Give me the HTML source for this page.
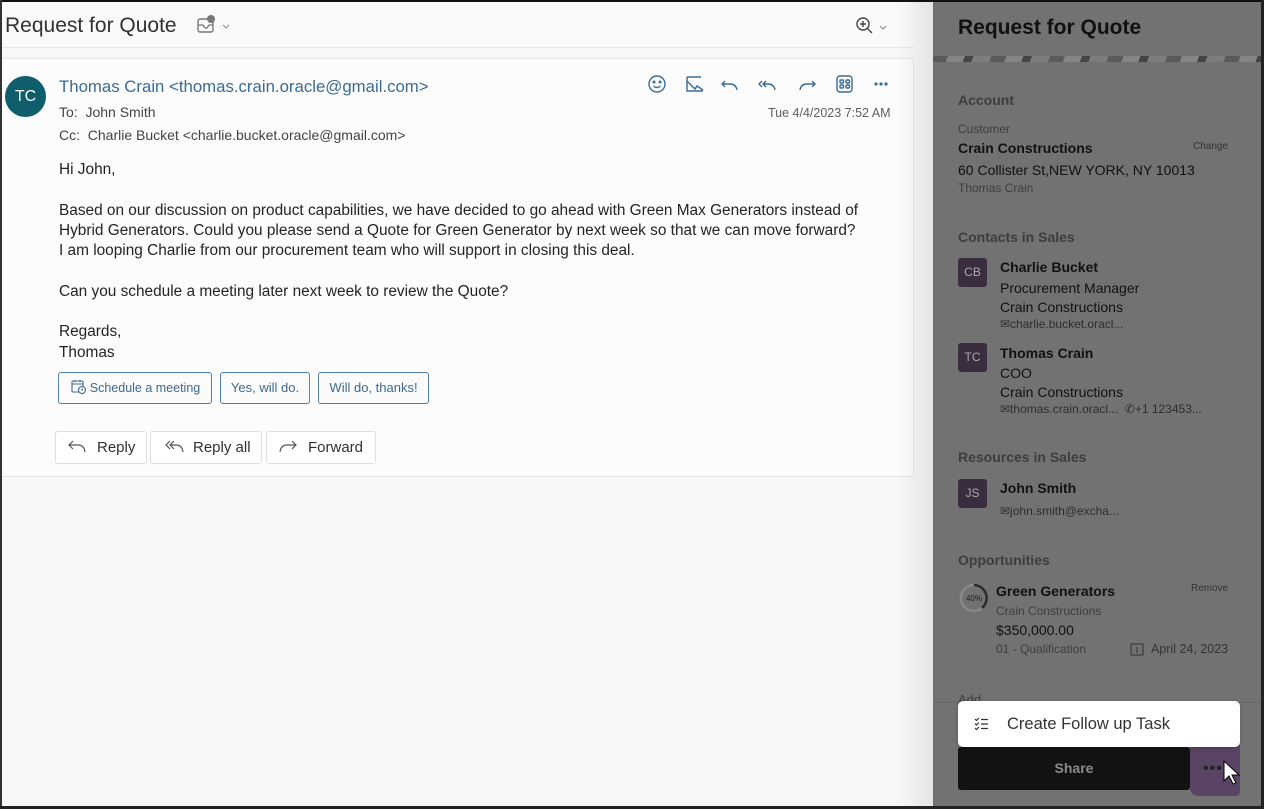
<!DOCTYPE html>
<html><head><meta charset="utf-8"><style>
*{margin:0;padding:0;box-sizing:border-box}
body{width:1264px;height:809px;overflow:hidden;background:#f8f8f7;font-family:"Liberation Sans",sans-serif;position:relative;color:#252423}
.a{position:absolute;white-space:nowrap}
.ic{position:absolute}
.btn{position:absolute;border:1px solid #4f7faa;border-radius:3px;color:#3c6a92;font-size:13px;text-align:center;line-height:30px;height:32px;background:#fbfbfb}
.rb{position:absolute;border:1px solid #e1dfdd;border-radius:3px;font-size:15px;color:#323130;height:33px;line-height:31px;background:#fff}
.p{color:#111}
</style></head><body>
<div class="a" style="left:0;top:0;width:1264px;height:2px;background:#111"></div>
<div class="a" style="left:0;top:0;width:2px;height:809px;background:#333"></div>
<div class="a" style="left:0;top:806px;width:1264px;height:3px;background:#222"></div>
<!-- header -->
<div class="a" style="left:2px;top:2px;width:912px;height:46px;background:#fafaf9;border-bottom:1px solid #e8e8e8"></div>
<div class="a" style="left:5px;top:14px;font-size:21px;color:#323130">Request for Quote</div>
<svg class="ic" style="left:196px;top:15px" width="40" height="22"><rect x="2" y="4" width="15" height="13" rx="2" fill="none" stroke="#777" stroke-width="1.4"/><path d="M2 10h5l2 3h2l2-3h4" fill="none" stroke="#777" stroke-width="1.3"/><circle cx="15" cy="4" r="4" fill="#777"/><path d="M27 10l3 3 3-3" fill="none" stroke="#888" stroke-width="1"/></svg>
<svg class="ic" style="left:855px;top:16px" width="36" height="20"><circle cx="8" cy="8" r="6" fill="none" stroke="#444" stroke-width="1.4"/><path d="M8 5v6M5 8h6M12 12l5 5" stroke="#444" stroke-width="1.4"/><path d="M25 10l3 3 3-3" fill="none" stroke="#888"/></svg>
<!-- message card -->
<div class="a" style="left:2px;top:58px;width:912px;height:419px;background:#fcfcfc;border:1px solid #e6e6e6;border-left:none"></div>
<div class="a" style="left:5px;top:76px;width:41px;height:41px;border-radius:50%;background:#0e5f6b;color:#fff;font-size:16px;text-align:center;line-height:41px">TC</div>
<div class="a" style="left:59px;top:77px;font-size:16.8px;color:#3b6c94">Thomas Crain &lt;thomas.crain.oracle@gmail.com&gt;</div>
<div class="a" style="left:59px;top:104px;font-size:14px;color:#444">To:&nbsp; John Smith</div>
<div class="a" style="left:59px;top:127px;font-size:14px;color:#444">Cc:&nbsp; Charlie Bucket &lt;charlie.bucket.oracle@gmail.com&gt;</div>
<div class="a" style="left:768px;top:106px;font-size:12.5px;color:#605e5c">Tue 4/4/2023 7:52 AM</div>
<svg class="ic" style="left:645px;top:72px" width="250" height="24" fill="none" stroke="#3b6c94" stroke-width="1.4">
<circle cx="12" cy="12" r="8"/><circle cx="9" cy="10" r=".8" fill="#3b6c94"/><circle cx="15" cy="10" r=".8" fill="#3b6c94"/><path d="M8.5 14q3.5 3 7 0"/>
<path d="M42 5v14h16M42 9l8 8 2-3 6 4M42 5h14"/>
<path d="M80 9l-3 3 3 3M77 12h8q6 0 7 6"/>
<path d="M117 9l-3 3 3 3M121 9l-3 3 3 3M118 12h5q6 0 7 6"/>
<path d="M167 9l3 3-3 3M170 12h-8q-6 0-7 6"/>
<rect x="192" y="4" width="15" height="16" rx="3"/><rect x="195" y="8" width="3.5" height="3" rx="1"/><rect x="201" y="8" width="3.5" height="3" rx="1"/><rect x="195" y="13" width="3.5" height="3" rx="1"/><rect x="201" y="13" width="3.5" height="3" rx="1"/>
<circle cx="231" cy="12" r=".9" fill="#3b6c94"/><circle cx="236" cy="12" r=".9" fill="#3b6c94"/><circle cx="241" cy="12" r=".9" fill="#3b6c94"/></svg>
<div class="a" style="left:59px;top:160px;font-size:15.4px;line-height:20.3px;color:#252423">Hi John,<br><br>Based on our discussion on product capabilities, we have decided to go ahead with Green Max Generators instead of<br>Hybrid Generators. Could you please send a Quote for Green Generator by next week so that we can move forward?<br>I am looping Charlie from our procurement team who will support in closing this deal.<br><br>Can you schedule a meeting later next week to review the Quote?<br><br>Regards,<br>Thomas</div>
<div class="btn" style="left:58px;top:372px;width:154px;padding-left:20px;font-size:12.5px">Schedule a meeting</div>
<svg class="ic" style="left:71px;top:379px" width="16" height="16" fill="none" stroke="#3c6a92" stroke-width="1.1"><rect x="1" y="2" width="11" height="11" rx="1"/><path d="M1 5h11M4 1v2M9 1v2"/><circle cx="11" cy="11" r="3.5" fill="#fbfbfb"/><path d="M11 9.5v1.5h1.3"/></svg>
<div class="btn" style="left:220px;top:372px;width:90px">Yes, will do.</div>
<div class="btn" style="left:318px;top:372px;width:111px">Will do, thanks!</div>
<div class="rb" style="left:55px;top:431px;width:92px;padding-left:41px">Reply</div>
<div class="rb" style="left:150px;top:431px;width:112px;padding-left:42px">Reply all</div>
<div class="rb" style="left:266px;top:431px;width:110px;padding-left:41px">Forward</div>
<svg class="ic" style="left:66px;top:438px" width="310" height="20" fill="none" stroke="#555" stroke-width="1.2">
<path d="M7 3l-4 4 4 4M3 7h9q6 0 7 7"/>
<path d="M104 3l-4 4 4 4M108 3l-4 4 4 4M105 7h5q6 0 7 7"/>
<path d="M226 3l4 4-4 4M230 7h-9q-6 0-7 7"/></svg>
<!-- shadow -->
<div class="a" style="left:896px;top:0;width:37px;height:806px;background:linear-gradient(90deg,rgba(0,0,0,0),rgba(0,0,0,.08))"></div>
<!-- right panel -->
<div class="a" style="left:933px;top:2px;width:328px;height:804px;background:#727272"></div>
<div class="a" style="left:1261px;top:0;width:3px;height:809px;background:#222"></div>
<div class="a" style="left:933px;top:56px;width:328px;height:6px;background:repeating-linear-gradient(110deg,#5a5a5a 0 14px,#858585 14px 30px,#444 30px 38px,#7d7d7d 38px 55px)"></div>
<div class="a p" style="left:958px;top:16px;font-size:21px;font-weight:bold">Request for Quote</div>
<div class="a" style="left:958px;top:92px;font-size:14px;font-weight:bold;color:#3d3d3d">Account</div>
<div class="a" style="left:958px;top:122px;font-size:12px;color:#3e3e3e">Customer</div>
<div class="a p" style="left:958px;top:140px;font-size:14px;font-weight:bold">Crain Constructions</div>
<div class="a" style="left:1193px;top:141px;font-size:10px;color:#333">Change</div>
<div class="a p" style="left:958px;top:162px;font-size:14px">60 Collister St,NEW YORK, NY 10013</div>
<div class="a" style="left:958px;top:181px;font-size:12px;color:#3e3e3e">Thomas Crain</div>
<div class="a" style="left:958px;top:229px;font-size:14px;font-weight:bold;color:#3d3d3d">Contacts in Sales</div>
<div class="a" style="left:958px;top:258px;width:29px;height:29px;border-radius:3px;background:#3b2d40;color:#aaa;font-size:12px;text-align:center;line-height:29px">CB</div>
<div class="a p" style="left:1000px;top:259px;font-size:14px;font-weight:bold">Charlie Bucket</div>
<div class="a p" style="left:1000px;top:279px;font-size:14px;line-height:19px">Procurement Manager<br>Crain Constructions</div>
<div class="a" style="left:1000px;top:317px;font-size:12px;color:#2e2e2e">✉charlie.bucket.oracl...</div>
<div class="a" style="left:958px;top:343px;width:29px;height:29px;border-radius:3px;background:#3b2d40;color:#aaa;font-size:12px;text-align:center;line-height:29px">TC</div>
<div class="a p" style="left:1000px;top:345px;font-size:14px;font-weight:bold">Thomas Crain</div>
<div class="a p" style="left:1000px;top:364px;font-size:14px;line-height:19px">COO<br>Crain Constructions</div>
<div class="a" style="left:1000px;top:402px;font-size:12px;color:#2e2e2e">✉thomas.crain.oracl... &nbsp;✆+1 123453...</div>
<div class="a" style="left:958px;top:449px;font-size:14px;font-weight:bold;color:#3d3d3d">Resources in Sales</div>
<div class="a" style="left:958px;top:479px;width:29px;height:29px;border-radius:3px;background:#3b2d40;color:#aaa;font-size:12px;text-align:center;line-height:29px">JS</div>
<div class="a p" style="left:1000px;top:480px;font-size:14px;font-weight:bold">John Smith</div>
<div class="a" style="left:1000px;top:504px;font-size:12px;color:#2e2e2e">✉john.smith@excha...</div>
<div class="a" style="left:958px;top:552px;font-size:14px;font-weight:bold;color:#3d3d3d">Opportunities</div>
<svg class="ic" style="left:958px;top:582px" width="32" height="32"><circle cx="16" cy="16" r="13" fill="none" stroke="#888" stroke-width="2.5"/><path d="M16 3a13 13 0 0 1 8 23" fill="none" stroke="#2a2a2a" stroke-width="2.5"/><text x="16" y="19" font-size="8" text-anchor="middle" fill="#222" font-family="Liberation Sans">40%</text></svg>
<div class="a p" style="left:996px;top:583px;font-size:14px;font-weight:bold">Green Generators</div>
<div class="a" style="left:1191px;top:583px;font-size:10px;color:#333">Remove</div>
<div class="a" style="left:996px;top:604px;font-size:12px;color:#3e3e3e">Crain Constructions</div>
<div class="a p" style="left:996px;top:622px;font-size:14px">$350,000.00</div>
<div class="a" style="left:996px;top:642px;font-size:12px;color:#3e3e3e">01 - Qualification</div>
<svg class="ic" style="left:1130px;top:642px" width="15" height="15" fill="none" stroke="#333"><rect x="1" y="2" width="12" height="11"/><path d="M7 5v6"/></svg>
<div class="a" style="left:1151px;top:642px;font-size:12.5px;color:#333">April 24, 2023</div>
<div class="a" style="left:958px;top:692px;font-size:13px;color:#3d3d3d">Add</div>
<div class="a" style="left:933px;top:702px;width:328px;height:1px;background:#666"></div>
<div class="a" style="left:958px;top:747px;width:232px;height:43px;background:#121212;border-radius:3px;color:#8a8a8a;font-size:14px;font-weight:bold;text-align:center;line-height:43px">Share</div>
<div class="a" style="left:1190px;top:745px;width:50px;height:51px;background:#5a4465;border-radius:0 0 4px 8px"></div>
<div class="a" style="left:1203px;top:760px;font-size:16px;color:#222;letter-spacing:1px">•••</div>
<svg class="ic" style="left:1222px;top:759px" width="20" height="28"><path d="M2 2v20l5-5 4 8 3-1-4-8h7z" fill="#fff" stroke="#000"/></svg>
<div class="a" style="left:958px;top:701px;width:282px;height:46px;background:#fff;border-radius:5px;box-shadow:0 1px 4px rgba(0,0,0,.2)"></div>
<svg class="ic" style="left:974px;top:717px" width="16" height="14" stroke="#333" stroke-width="1.2" fill="none"><path d="M1 2l1.5 1.5L5 1M1 6.5l1.5 1.5L5 5.5M1 11l1.5 1.5L5 10M7 2.5h7M7 7h7M7 11.5h7"/></svg>
<div class="a" style="left:1007px;top:715px;font-size:16.5px;color:#333">Create Follow up Task</div>
</body></html>
